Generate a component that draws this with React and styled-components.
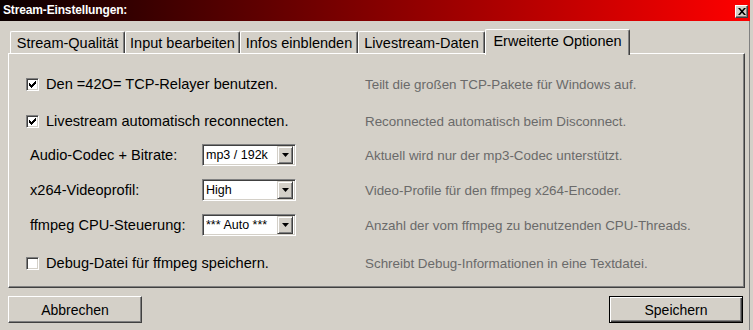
import React from "react";
import styled, { createGlobalStyle } from "styled-components";

const Global = createGlobalStyle`
  html, body { margin: 0; padding: 0; background: #d4d0c8; }
  body { font-family: "Liberation Sans", Arial, sans-serif; }
  * { box-sizing: border-box; }
`;

const Screen = styled.div`
  width: 753px;
  height: 330px;
  display: flex;
  background: #d4d0c8;
  overflow: hidden;
`;

const Window = styled.div`
  width: 750px;
  display: flex;
  flex-direction: column;
`;

const TitleBar = styled.div`
  height: 21px;
  display: flex;
  align-items: center;
  justify-content: space-between;
  padding: 0 2px 0 3px;
  background: linear-gradient(to right, #0a0000, #ff0000);
`;

const Title = styled.div`
  color: #fff;
  font-weight: bold;
  font-size: 12px;
  letter-spacing: -0.15px;
  margin-top: -1px;
`;

const CloseBtn = styled.div`
  width: 13px;
  height: 13px;
  margin-top: 1px;
  background: #d4d0c8;
  border-top: 1px solid #fff;
  border-left: 1px solid #fff;
  border-right: 1px solid #404040;
  border-bottom: 1px solid #404040;
  box-shadow: inset -1px -1px #808080;
  display: flex;
  align-items: center;
  justify-content: center;
`;

const Body = styled.div`
  flex: 1;
  display: flex;
  flex-direction: column;
  border-right: 1px solid #808080;
  padding-left: 8px;
`;

const TabRow = styled.div`
  display: flex;
  align-items: flex-end;
  height: 24px;
  margin-top: 8px;
  padding-left: 2px;
  position: relative;
  z-index: 1;
`;

const Tab = styled.div`
  width: ${(p) => p.$w}px;
  height: ${(p) => (p.$active ? 26 : 22)}px;
  margin-bottom: ${(p) => (p.$active ? -2 : 0)}px;
  background: #d4d0c8;
  border-top: 1px solid #fff;
  border-left: 1px solid #fff;
  border-right: 1px solid #404040;
  box-shadow: inset -1px 0 #808080;
  border-top-left-radius: 2px;
  border-top-right-radius: 2px;
  font-size: 14.5px;
  color: #000;
  display: flex;
  justify-content: center;
  padding-top: 3px;
  white-space: nowrap;
`;

const Panel = styled.div`
  width: 737px;
  height: 235px;
  border-top: 1px solid #fff;
  border-left: 1px solid #fff;
  border-right: 1px solid #404040;
  border-bottom: 1px solid #404040;
  box-shadow: inset -1px -1px #808080;
  padding: 19px 0 0 17px;
  display: flex;
  flex-direction: column;
`;

const Row = styled.div`
  height: 22px;
  margin-top: ${(p) => p.$mt || 0}px;
  display: flex;
  align-items: center;
`;

const Left = styled.div`
  width: 339px;
  display: flex;
  align-items: center;
  color: #000;
  font-size: 14.6px;
`;

const CheckLabel = styled.span`
  margin-left: 7px;
  white-space: nowrap;
`;

const Label = styled.span`
  width: 176px;
  padding-left: 4px;
  white-space: nowrap;
`;

const Desc = styled.span`
  color: #6a6a6a;
  font-size: 13.4px;
  white-space: nowrap;
`;

const CheckBox = styled.span`
  width: 13px;
  height: 13px;
  background: #fff;
  border-top: 1px solid #808080;
  border-left: 1px solid #808080;
  border-right: 1px solid #fff;
  border-bottom: 1px solid #fff;
  box-shadow: inset 1px 1px #404040, inset -1px -1px #d4d0c8;
  display: flex;
  align-items: center;
  justify-content: center;
  flex: none;
`;

const Select = styled.div`
  width: 94px;
  height: 22px;
  background: #fff;
  border-top: 1px solid #808080;
  border-left: 1px solid #808080;
  border-right: 1px solid #fff;
  border-bottom: 1px solid #fff;
  box-shadow: inset 1px 1px #404040, inset -1px -1px #d4d0c8;
  display: flex;
  align-items: center;
  padding: 2px 2px 2px 3px;
`;

const SelectText = styled.span`
  flex: 1;
  font-size: 12.5px;
  color: #000;
  white-space: nowrap;
  overflow: hidden;
`;

const ArrowBtn = styled.span`
  width: 16px;
  height: 18px;
  background: #d4d0c8;
  border-top: 1px solid #d4d0c8;
  border-left: 1px solid #d4d0c8;
  border-right: 1px solid #404040;
  border-bottom: 1px solid #404040;
  box-shadow: inset 1px 1px #fff, inset -1px -1px #808080;
  display: flex;
  align-items: center;
  justify-content: center;
`;

const ButtonRow = styled.div`
  display: flex;
  justify-content: space-between;
  margin-top: 8px;
  padding-right: 6px;
`;

const Button = styled.div`
  width: 134px;
  height: 27px;
  background: #d4d0c8;
  font-size: 14px;
  color: #000;
  display: flex;
  align-items: center;
  justify-content: center;
  border: 1px solid;
  border-top-color: ${(p) => (p.$default ? "#000" : "#fff")};
  border-left-color: ${(p) => (p.$default ? "#000" : "#fff")};
  border-right-color: ${(p) => (p.$default ? "#000" : "#404040")};
  border-bottom-color: ${(p) => (p.$default ? "#000" : "#404040")};
  box-shadow: ${(p) =>
    p.$default
      ? "inset 1px 1px #fff, inset -1px -1px #404040, inset -2px -2px #808080"
      : "inset -1px -1px #808080"};
`;

const Check = () => (
  <svg width="7" height="7" viewBox="0 0 7 7">
    <path d="M0 2h1v1h1v1h1V3h1V2h1V1h1V0h1v3H6v1H5v1H4v1H3v1H2V6H1V5H0z" fill="#000" />
  </svg>
);

const Arrow = () => (
  <svg width="7" height="4" viewBox="0 0 7 4">
    <path d="M0 0h7L3.5 4z" fill="#000" />
  </svg>
);

const CloseX = () => (
  <svg width="8" height="7" viewBox="0 0 8 7">
    <path d="M0 0h2l2 2.2L6 0h2L5 3.5 8 7H6L4 4.8 2 7H0l3-3.5z" fill="#000" />
  </svg>
);

const tabs = [
  { t: "Stream-Qualität", w: 115 },
  { t: "Input bearbeiten", w: 115 },
  { t: "Infos einblenden", w: 118 },
  { t: "Livestream-Daten", w: 127 },
  { t: "Erweiterte Optionen", w: 145, active: true },
];

const rows = [
  { type: "check", checked: true, label: "Den =42O= TCP-Relayer benutzen.", desc: "Teilt die großen TCP-Pakete für Windows auf.", mt: 0 },
  { type: "check", checked: true, label: "Livestream automatisch reconnecten.", desc: "Reconnected automatisch beim Disconnect.", mt: 15 },
  { type: "select", label: "Audio-Codec + Bitrate:", value: "mp3 / 192k", desc: "Aktuell wird nur der mp3-Codec unterstützt.", mt: 12 },
  { type: "select", label: "x264-Videoprofil:", value: "High", desc: "Video-Profile für den ffmpeg x264-Encoder.", mt: 13 },
  { type: "select", label: "ffmpeg CPU-Steuerung:", value: "*** Auto ***", desc: "Anzahl der vom ffmpeg zu benutzenden CPU-Threads.", mt: 13 },
  { type: "check", checked: false, label: "Debug-Datei für ffmpeg speichern.", desc: "Schreibt Debug-Informationen in eine Textdatei.", mt: 16 },
];

export default function App() {
  return (
    <Screen>
      <Global />
      <Window>
        <TitleBar>
          <Title>Stream-Einstellungen:</Title>
          <CloseBtn>
            <CloseX />
          </CloseBtn>
        </TitleBar>
        <Body>
          <TabRow>
            {tabs.map((t) => (
              <Tab key={t.t} $w={t.w} $active={t.active}>
                {t.t}
              </Tab>
            ))}
          </TabRow>
          <Panel>
            {rows.map((r) => (
              <Row key={r.label} $mt={r.mt}>
                <Left>
                  {r.type === "check" ? (
                    <>
                      <CheckBox>{r.checked && <Check />}</CheckBox>
                      <CheckLabel>{r.label}</CheckLabel>
                    </>
                  ) : (
                    <>
                      <Label>{r.label}</Label>
                      <Select>
                        <SelectText>{r.value}</SelectText>
                        <ArrowBtn>
                          <Arrow />
                        </ArrowBtn>
                      </Select>
                    </>
                  )}
                </Left>
                <Desc>{r.desc}</Desc>
              </Row>
            ))}
          </Panel>
          <ButtonRow>
            <Button>Abbrechen</Button>
            <Button $default>Speichern</Button>
          </ButtonRow>
        </Body>
      </Window>
    </Screen>
  );
}
